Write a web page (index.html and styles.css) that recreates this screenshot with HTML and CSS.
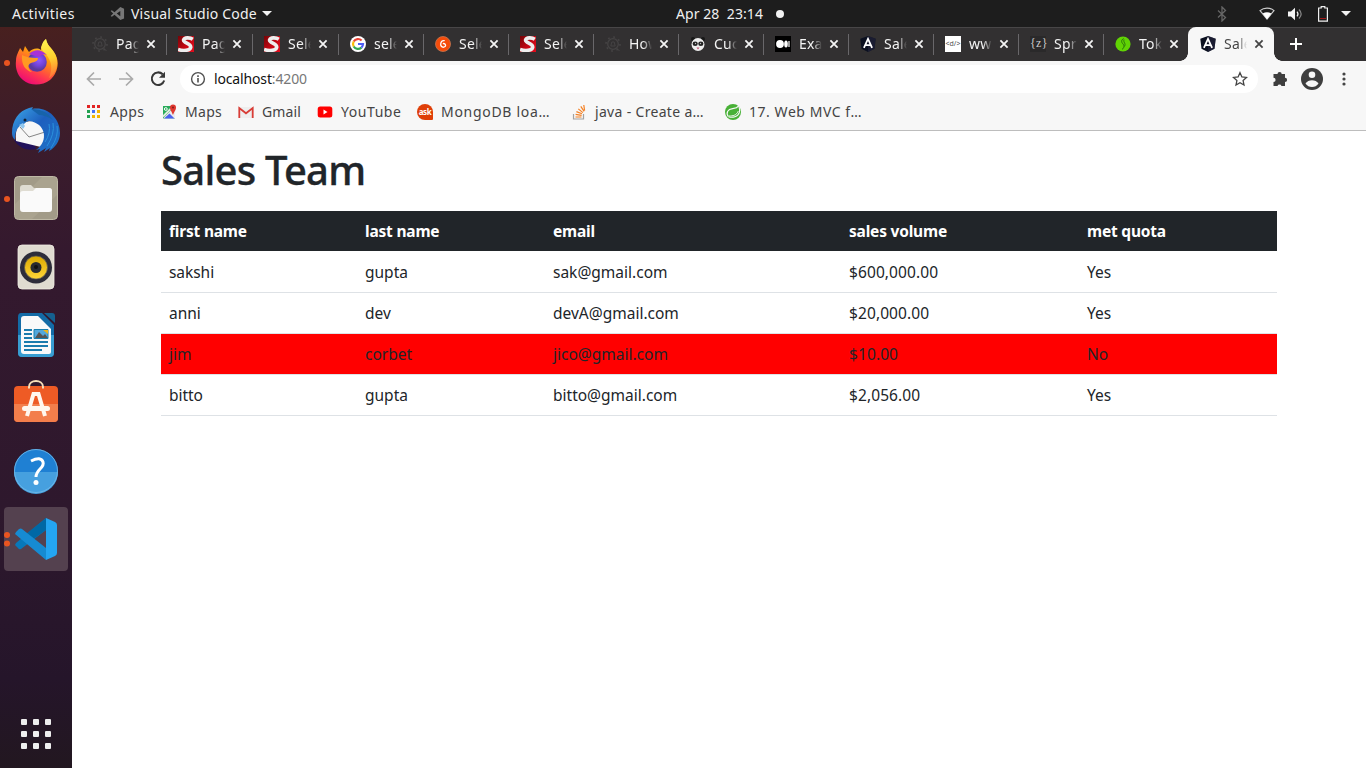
FILE: index.html
```html
<!DOCTYPE html>
<html lang="en">
<head>
<meta charset="utf-8">
<title>Sales Team</title>
<link rel="stylesheet" href="styles.css">
</head>
<body>
<svg class="defs" aria-hidden="true">
  <defs>
    <linearGradient id="fox" x1="0.8" y1="0" x2="0.3" y2="1"><stop offset="0" stop-color="#fff44f"/><stop offset=".4" stop-color="#ff980e"/><stop offset=".75" stop-color="#ff3750"/><stop offset="1" stop-color="#eb0878"/></linearGradient>
    <linearGradient id="foxtail" x1="0.5" y1="0" x2="0.6" y2="1"><stop offset="0" stop-color="#fff44f"/><stop offset=".5" stop-color="#ffd02e"/><stop offset="1" stop-color="#ff7139"/></linearGradient>
    <radialGradient id="globe" cx=".6" cy=".4"><stop offset="0" stop-color="#9059ff"/><stop offset=".6" stop-color="#7243d8"/><stop offset="1" stop-color="#5b3a9e"/></radialGradient>
    <linearGradient id="bird" x1="0" y1="0" x2="1" y2="1"><stop offset="0" stop-color="#3da9e8"/><stop offset=".45" stop-color="#1d5fbe"/><stop offset="1" stop-color="#1f74c8"/></linearGradient>
    <linearGradient id="redfade" x1="0" y1="0" x2="1" y2="1"><stop offset="0" stop-color="#730407"/><stop offset=".55" stop-color="#c50713"/><stop offset="1" stop-color="#e30b1c"/></linearGradient>
    <linearGradient id="cone" x1="0" y1="0" x2="0" y2="1"><stop offset="0" stop-color="#dba900"/><stop offset="1" stop-color="#ffd638"/></linearGradient>
  </defs>
  <symbol id="close" viewBox="0 0 10 10"><path d="M1.4 1.4l7.2 7.2M8.6 1.4L1.4 8.6" fill="none" stroke="currentColor" stroke-width="1.8"/></symbol>
  <symbol id="gear" viewBox="0 0 16 16"><g fill="none" stroke="#454344"><circle cx="8" cy="8" r="5.3" stroke-width="1.3"/><circle cx="8" cy="8" r="7" stroke-width="1.6" stroke-dasharray="1.8 3.7"/><path d="M5.8 10l1-4h2.4l1 4zM11.5 12l3 3" /></g></symbol>
  <symbol id="sel" viewBox="0 0 16 16"><path fill="url(#redfade)" d="M0 0h16v16H0z"/><path d="M14.800 3.200C12 1.400 6.400 1.200 5.600 3.900c-.7 3 7.800 3.600 7.100 7.400-.6 3.500-7.500 3.800-12.600 2.200" fill="none" stroke="#eee" stroke-width="3.6"/></symbol>
  <symbol id="ng" viewBox="0 0 16 16"><path fill="#0b1020" d="M8 0l7.700 2.700-1.200 10L8 16l-6.500-3.300-1.200-10z"/><path fill="#24243e" opacity=".6" d="M8 0l7.700 2.700-1.200 10L8 16z"/><path d="M3.900 11.800L8 2.800l4.100 9M5.600 9.100h4.800" fill="none" stroke="#fff" stroke-width="1.800"/></symbol>
</svg>

<header class="topbar">
  <span class="activities">Activities</span>
  <svg class="topcode" viewBox="0 0 16 16"><path d="M11 1L4.800 6.700 2 4.500.7 5.300 3.400 8 .7 10.700l1.300.8 2.800-2.200L11 15l4-1.800V2.800zM11 5.200v5.600L7.200 8z" fill="#777" fill-rule="evenodd"/></svg>
  <span class="appname">Visual Studio Code</span>
  <svg class="caret" viewBox="0 0 10 5"><path d="M0 0h10L5 5z" fill="#f2f2f2"/></svg>
  <span class="clock">Apr 28&nbsp; 23:14</span>
  <span class="notice"></span>
  <div class="status">
    <svg class="bt" viewBox="0 0 10 16"><path d="M1 4.500l7.500 7L5 15V1l3.500 3.500-7.500 7" fill="none" stroke="#666" stroke-width="1.300"/></svg>
    <svg class="wifi" viewBox="0 0 16 13"><path d="M1 3.600C5 .2 11 .2 15 3.600L8 12z" fill="none" stroke="#ccc" stroke-width="1.200"/><path d="M3.700 6.500q4.300-2.400 8.600 0L8 12.300z" fill="#fff"/></svg>
    <svg class="volume" viewBox="0 0 15 14"><path d="M0 4.500h3L7 .8v12.400L3 9.500H0z" fill="#f4f4f4"/><path d="M9 4.600q2 2.400 0 4.800" fill="none" stroke="#eee" stroke-width="1.200"/><path d="M11 2.500q4.300 4.500 0 9" fill="none" stroke="#888" stroke-width="1.200"/></svg>
    <svg class="battery" viewBox="0 0 10 16"><path d="M.6 2h2.600V.7h3.600V2h2.600v13.200H.6z" fill="none" stroke="#eee" stroke-width="1.200"/><path d="M2 12.500h6" stroke="#a01818"/></svg>
    <svg class="caret" viewBox="0 0 10 5"><path d="M0 0h10L5 5z" fill="#f2f2f2"/></svg>
  </div>
</header>

<div class="desktop">
  <nav class="dock">
    <div class="slot running"><svg viewBox="0 0 48 48">
      <path d="M4 23C4 17 7 13 8 10l3 4 2-6 4 6C20 11 25 9 29 12c0-4 2-8 5-11 1 6 5 8 8 13 7 10 3 22-4 28-8 6-20 6-27 0C6 38 3 31 4 23z" fill="url(#fox)"/>
      <path d="M29 10c1-5 3-8 5-9 1 6 4 8 7 12 8 11 3 23-4 27 3-8 3-14 0-19-2-5-6-7-8-11z" fill="url(#foxtail)"/>
      <circle cx="25" cy="24" r="9.800" fill="url(#globe)"/>
      <path d="M10 17c4 2 8 3 16 3 0 3-3 4-7 5-4 2-3 6 1 9-6-1-11-7-10-17z" fill="#ff9a22"/>
      <path d="M17 16q9-8 18 1-4-2-8 2z" fill="#a831d7"/></svg></div>
    <div class="slot"><svg viewBox="0 0 48 48">
      <path d="M2 34c6 9 14 11 22 9l-2-6z" fill="#20115b"/>
      <path d="M6 20q10-8 27-3l3 8-3 17L4 35q-1-9 2-15z" fill="#f7f7f7"/>
      <path d="M8 21l9 10 16-5" fill="none" stroke="#777" stroke-width=".900"/>
      <path d="M0 27C0 14 7 5 17 2l4-1-1 2C34 0 48 11 48 27c0 8-5 15-11 18l1-3-6 4 2-4-8 5 2-4-4 1c13-9 10-27-7-29-5 1-5 5-8 4-5 4-6 8-6 15C1 32 0 30 0 27z" fill="url(#bird)"/>
      <path d="M19 3q14-1 22 11-8-5-14-5z" fill="#1763aa"/>
      <path d="M41 17q2 11-6 23M45 20q2 10-6 22M37 18q2 9-4 18" stroke="#2b91dc" fill="none"/>
      <path d="M7 19l4-2 2 3-2 3z" fill="#91c7ee"/><circle cx="13" cy="14" r="1.500" fill="#123"/></svg></div>
    <div class="slot running"><svg viewBox="0 0 48 48">
      <rect x="2.500" y="2.500" width="43" height="43" rx="4" fill="#a29b88" stroke="#beb8a5"/><path d="M3 30L30 3h12q3 0 3 3v15L20 45H6q-3 0-3-3z" fill="#b3ac99" opacity=".45"/>
      <path d="M8 14q0-3 3-3h8l3 3h15q3 0 3 3v6H8z" fill="#dfdcd2"/><path d="M8 20q0-3 3-3h10l3-3h13q3 0 3 3v18q0 3-3 3H11q-3 0-3-3z" fill="#fafafa"/></svg></div>
    <div class="slot"><svg viewBox="0 0 48 48">
      <rect x="6" y="2" width="36" height="44" rx="4" fill="#dfdbd0" stroke="#f0ede5" stroke-width=".8"/><circle cx="24" cy="24.500" r="16" fill="#2d2d3a"/><circle cx="24" cy="24.500" r="11.500" fill="url(#cone)" stroke="#555" stroke-width=".7"/><circle cx="24" cy="24.500" r="5.500" fill="#292b30"/><circle cx="24" cy="24" r="2" fill="#111"/></svg></div>
    <div class="slot"><svg viewBox="0 0 48 48">
      <path d="M9 2h21l12 12v28q0 4-4 4H10q-4 0-4-4V6q0-4 3-4z" fill="#136ba6"/><path d="M6 24h36v18q0 4-4 4H10q-4 0-4-4z" fill="#389dd1"/><path d="M32 2h8q3 0 3 3v7z" fill="#15608f"/>
      <path d="M12 5h14l13 13v23q0 2-2 2H12q-3 0-3-3V8q0-3 3-3z" fill="#f9f9f9"/>
      <path d="M12 19h8M12 23h8M12 27h8M12 31h24M12 35h24M12 39h18" stroke="#1a7bad" stroke-width="1.800"/><path d="M22 18.500h14v9H22z" fill="#54a8dc" stroke="#177eae"/><path d="M23 27l4-6 4 4 2-2 3 4z" fill="#555"/><path d="M31 19h5v4z" fill="#edb51b"/></svg></div>
    <div class="slot"><svg viewBox="0 0 48 48">
      <rect x="2" y="7" width="44" height="36" rx="4" fill="#ee5b25"/><path d="M2 25h44v14q0 4-4 4H6q-4 0-4-4z" fill="#f37e4b"/><path d="M17 9.500V8c0-8 14-8 14 0v1.500" fill="none" stroke="#f8dfb9" stroke-width="2"/>
      <path d="M15 37l6.500-22h5L33 37" fill="none" stroke="#fff7ee" stroke-width="4"/><rect x="10" y="27" width="28" height="5" rx="2.500" fill="#fff7ee"/></svg></div>
    <div class="slot"><svg viewBox="0 0 48 48"><circle cx="24" cy="24" r="22" fill="#1f80d3"/><path d="M2 25h44a22 22 0 0 1-44 0z" fill="#46a0df"/><circle cx="24" cy="24" r="21.500" fill="none" stroke="#75bbe8" stroke-width=".8"/><path d="M19 14q10-5 12 1c2 6-7 7-7 15" fill="none" stroke="#fff" stroke-width="3"/><circle cx="24" cy="35.500" r="2.500" fill="#fff"/></svg></div>
    <div class="slot focused"><svg viewBox="0 0 48 48">
      <path d="M34 3v12L9 34q-2 1-3-1l-3-3 1-2z" fill="#0878b9"/><path d="M34 3v12L20 25l-6-6z" fill="#0068a5"/>
      <path d="M4 17l3-3q2-1 3 0l24 19v12L3 19z" fill="#168bd2"/><path d="M34 3l9 4q2 1 2 3v28q0 2-2 3l-9 4z" fill="#24a5f1"/></svg></div>
    <div class="apps-grid"><i></i><i></i><i></i><i></i><i></i><i></i><i></i><i></i><i></i></div>
  </nav>

  <main class="browser">
    <div class="tabs">
      <div class="tab wide"><svg class="fav"><use href="#gear"/></svg><span class="label">Pag</span><svg class="x"><use href="#close"/></svg></div>
      <div class="tab wide"><svg class="fav"><use href="#sel"/></svg><span class="label">Pag</span><svg class="x"><use href="#close"/></svg></div>
      <div class="tab wide"><svg class="fav"><use href="#sel"/></svg><span class="label">Sele</span><svg class="x"><use href="#close"/></svg></div>
      <div class="tab"><svg class="fav" viewBox="0 0 16 16"><circle cx="8" cy="8" r="8" fill="#fff"/><g fill="none" stroke-width="2.200"><path d="M11.600 4.500A5 5 0 0 0 3.700 5.500" stroke="#ea4335"/><path d="M3.700 5.500a5 5 0 0 0 0 5" stroke="#fbbc05"/><path d="M3.700 10.500a5 5 0 0 0 7.700 1.100" stroke="#34a853"/><path d="M11.400 11.600A5 5 0 0 0 13 8H8" stroke="#4d5df5"/></g></svg><span class="label">sele</span><svg class="x"><use href="#close"/></svg></div>
      <div class="tab"><svg class="fav" viewBox="0 0 16 16"><circle cx="8" cy="8" r="7.500" fill="#f54c0b" stroke="#c77752" stroke-width=".8"/><path d="M9.700 4.700C7 4 5.500 6 5.700 9q.5 2.500 3 2.200 2.200-.4 1.800-2.200-.6-2-2.700-1.400" fill="none" stroke="#fff" stroke-width="1.300"/></svg><span class="label">Sele</span><svg class="x"><use href="#close"/></svg></div>
      <div class="tab"><svg class="fav"><use href="#sel"/></svg><span class="label">Sele</span><svg class="x"><use href="#close"/></svg></div>
      <div class="tab"><svg class="fav"><use href="#gear"/></svg><span class="label">How</span><svg class="x"><use href="#close"/></svg></div>
      <div class="tab"><svg class="fav" viewBox="0 0 16 16"><circle cx="3" cy="3" r="2" fill="#171717"/><circle cx="13" cy="3" r="2" fill="#171717"/><circle cx="8" cy="8.500" r="6.500" fill="#eee"/><ellipse cx="5.200" cy="7.800" rx="2.600" ry="2.200" fill="#222"/><ellipse cx="10.800" cy="7.800" rx="2.600" ry="2.200" fill="#222"/><circle cx="5.500" cy="7.500" r=".7" fill="#bbb"/><circle cx="10.500" cy="7.500" r=".7" fill="#bbb"/><path d="M6.500 11.500h3l-1.500 2z" fill="#c05070"/></svg><span class="label">Cuc</span><svg class="x"><use href="#close"/></svg></div>
      <div class="tab"><svg class="fav" viewBox="0 0 16 16"><path d="M0 0h16v16H0z"/><circle cx="5" cy="8" r="3.900" fill="#fff"/><ellipse cx="11" cy="8" rx="1.800" ry="3.600" fill="#fff"/><path d="M14 5v6" stroke="#fff" stroke-width="1.200"/></svg><span class="label">Exa</span><svg class="x"><use href="#close"/></svg></div>
      <div class="tab"><svg class="fav"><use href="#ng"/></svg><span class="label">Sale</span><svg class="x"><use href="#close"/></svg></div>
      <div class="tab"><span class="fav codefav">&lt;d/&gt;</span><span class="label">ww</span><svg class="x"><use href="#close"/></svg></div>
      <div class="tab"><span class="fav bracefav">{z}</span><span class="label">Spr</span><svg class="x"><use href="#close"/></svg></div>
      <div class="tab last"><svg class="fav" viewBox="0 0 16 16"><circle cx="8" cy="8" r="7.600" fill="#61d404"/><path d="M8.600 2.500c-3 2-2 4-.6 5.500s1.500 3.500-1 5.500M9 3.500c-1 3 2.500 4 .3 7" fill="none" stroke="#28720c" stroke-width="1"/></svg><span class="label">Tok</span><svg class="x"><use href="#close"/></svg></div>
      <div class="tab active"><svg class="fav"><use href="#ng"/></svg><span class="label">Sale</span><svg class="x"><use href="#close"/></svg></div>
      <svg class="newtab" viewBox="0 0 12 12"><path d="M6 0v12M0 6h12" stroke="#fff" stroke-width="2"/></svg>
    </div>

    <div class="toolbar">
      <svg class="back" viewBox="0 0 16 16"><path d="M15 8H2M8 1.500L1.500 8 8 14.500" fill="none" stroke="#aaa" stroke-width="1.700"/></svg>
      <svg class="forward" viewBox="0 0 16 16"><path d="M1 8h13M8 1.500L14.500 8 8 14.500" fill="none" stroke="#aaa" stroke-width="1.700"/></svg>
      <svg class="reload" viewBox="0 0 16 16"><path d="M12.700 3.300A6.300 6.300 0 1 0 14.200 9.500" fill="none" stroke="#373737" stroke-width="2"/><path d="M15 .8v6H9z" fill="#373737"/></svg>
      <div class="omnibox">
        <svg class="info" viewBox="0 0 16 16"><circle cx="8" cy="8" r="6.400" fill="none" stroke="#505050" stroke-width="1.400"/><path d="M8 7v4.500M8 4.300v1.600" stroke="#505050" stroke-width="1.600"/></svg>
        <span class="url">localhost<span class="port">:4200</span></span>
        <svg class="star" viewBox="0 0 16 16"><path d="M8 1.700l1.900 4.200 4.600.5-3.400 3.100.9 4.600L8 11.800l-4 2.300.9-4.600-3.400-3.100 4.600-.5z" fill="none" stroke="#444" stroke-width="1.300"/></svg>
      </div>
      <svg class="puzzle" viewBox="0 0 16 16"><path d="M1.500 3h4a2.100 2.100 0 0 1 4.200 0H13v3.800a2.100 2.100 0 0 1 0 4.200v4H9.500a2.100 2.100 0 0 0-4 0h-4v-4a2.100 2.100 0 0 0 0-4.200z" fill="#3e3e3e"/></svg>
      <svg class="profile" viewBox="0 0 22 22"><circle cx="11" cy="11" r="11" fill="#3e3e3e"/><circle cx="11" cy="6.700" r="3.300" fill="#f7f7f7"/><path d="M4.500 15.500c2.500-4.500 10.500-4.500 13 0q-2.500 3.500-6.500 3.500t-6.500-3.500z" fill="#f7f7f7"/></svg>
      <svg class="menu" viewBox="0 0 4 14"><g fill="#444"><circle cx="2" cy="2" r="1.600"/><circle cx="2" cy="7" r="1.600"/><circle cx="2" cy="12" r="1.600"/></g></svg>
    </div>

    <div class="bookmarks">
      <a class="bm b-apps"><svg viewBox="0 0 16 16"><g transform="translate(1 0)"><path d="M1 1h3v3H1zM6 1h3v3H6zM11 1h3v3h-3z" fill="#e22424"/><path d="M1 6h3v3H1zM1 11h3v3H1z" fill="#21a150"/><path d="M6 6h3v3H6z" fill="#4671f5"/><path d="M11 6h3v3h-3zM6 11h3v3H6zM11 11h3v3h-3z" fill="#f4b400"/></g></svg><span>Apps</span></a>
      <a class="bm b-maps"><svg viewBox="0 0 16 16"><path d="M2 2h12v12.500H2z" fill="#29ab5a"/><path d="M2 14.500L14 2v12.500z" fill="#ececec"/><path d="M3 14.500l5.500-5 5 5z" fill="#4b60ee"/><path d="M2 12.500l8-8" stroke="#e5ecdf" stroke-width="1.800"/><circle cx="4.800" cy="5" r="1.400" fill="none" stroke="#fff"/><path d="M12 11C10.500 7 9 6 9 3.500a3 3 0 0 1 6 0C15 6 13.500 7 12 11z" fill="#df3830"/><circle cx="12" cy="3.500" r="1" fill="#801d1b"/></svg><span>Maps</span></a>
      <a class="bm b-gmail"><svg viewBox="0 0 16 16"><path d="M.5 3h15v11H.5z" fill="#eee"/><path d="M1.300 14V4L8 9.300 14.700 4v10" fill="none" stroke="#d93d37" stroke-width="1.800"/></svg><span>Gmail</span></a>
      <a class="bm b-yt"><svg viewBox="0 0 16 16"><rect x=".7" y="2.500" width="14.600" height="11" rx="2.500" fill="#f00"/><path d="M6.500 5.500v5l4-2.500z" fill="#fff"/></svg><span>YouTube</span></a>
      <a class="bm b-mongo"><i class="ask">ask</i><span>MongoDB loa…</span></a>
      <a class="bm b-java"><svg viewBox="0 0 16 16"><path d="M2.500 10v5h10v-5" fill="none" stroke="#a2a2a2" stroke-width="1.200"/><g stroke="#f48024" stroke-width="1.200"><path d="M4.500 13h6M4.600 10.400l6 .9M5.400 7.600l5.600 2.100M7.300 4.900l4.600 3.700M9.800 2.300l3.300 5M12.800 1l.8 5.500"/></g></svg><span>java - Create a…</span></a>
      <a class="bm b-mvc"><svg viewBox="0 0 16 16"><circle cx="8" cy="8" r="8" fill="#48b137"/><path d="M13.700 1.800C10.500 6 5 3.500 2.700 7.200 1.700 9 2.200 11 3.400 12.600" fill="none" stroke="#f7f7f7" stroke-width="1.200"/><path d="M3.500 12.700c4 1.300 9.500.2 10.800-4 .7-2.300.3-4.500-.4-6.700" fill="none" stroke="#f7f7f7" stroke-width="1.100"/><path d="M4 12c4 .2 7.500-.8 9.200-4.800" fill="none" stroke="#f7f7f7" stroke-width="1"/></svg><span>17. Web MVC f…</span></a>
    </div>

    <section class="page">
      <h1>Sales Team</h1>
      <table>
        <colgroup><col class="c1"><col class="c2"><col class="c3"><col class="c4"><col class="c5"></colgroup>
        <thead><tr><th>first name</th><th>last name</th><th>email</th><th>sales volume</th><th>met quota</th></tr></thead>
        <tbody>
          <tr><td>sakshi</td><td>gupta</td><td>sak@gmail.com</td><td>$600,000.00</td><td>Yes</td></tr>
          <tr><td>anni</td><td>dev</td><td>devA@gmail.com</td><td>$20,000.00</td><td>Yes</td></tr>
          <tr class="missed"><td>jim</td><td>corbet</td><td>jico@gmail.com</td><td>$10.00</td><td>No</td></tr>
          <tr><td>bitto</td><td>gupta</td><td>bitto@gmail.com</td><td>$2,056.00</td><td>Yes</td></tr>
        </tbody>
      </table>
    </section>
  </main>
</div>
</body>
</html>
```

FILE: styles.css
```css
* { box-sizing: border-box; }
body { margin: 0; width: 1366px; height: 768px; overflow: hidden; background: #fff; font-family: "Noto Sans", "Open Sans", sans-serif; }
svg { display: block; flex: none; }
.defs { position: absolute; width: 0; height: 0; }

.topbar { height: 27px; background: #1d1d1d; color: #f0f0f0; display: flex; align-items: center; font-size: 14px; white-space: nowrap; }
.activities { margin-left: 12px; width: 98px; letter-spacing: .45px; }
.topcode { width: 15px; height: 15px; }
.appname { margin-left: 6px; width: 126px; letter-spacing: .22px; }
.caret { width: 10px; height: 5px; margin-left: 5px; }
.clock { margin-left: 404px; width: 88px; letter-spacing: .07px; }
.notice { width: 8px; height: 8px; border-radius: 50%; background: #f2f2f2; margin-left: 12px; }
.status { margin-left: 433px; display: flex; align-items: center; }
.bt { width: 10px; height: 16px; }
.wifi { width: 16px; height: 13px; margin-left: 32px; }
.volume { width: 15px; height: 14px; margin-left: 13px; }
.battery { width: 10px; height: 16px; margin-left: 15px; }
.status .caret { margin-left: 13px; }

.desktop { display: flex; height: 741px; }
.dock { width: 72px; flex: none; display: flex; flex-direction: column; align-items: center; padding-top: 3px; background: linear-gradient(#48201f 0, #3b1c2c 16%, #34192e 30%, #2e182d 65%, #25152a 88%, #221720); }
.slot { position: relative; width: 64px; height: 64px; margin-bottom: 4.2px; border-radius: 4px; display: flex; align-items: center; justify-content: center; }
.slot svg { width: 48px; height: 48px; }
.focused { background: #54414f; margin-bottom: 0; }
.running::before, .focused::before { content: ""; position: absolute; left: 0; top: 30px; width: 6px; height: 6px; border-radius: 50%; background: #e95420; }
.focused::before { top: 25px; box-shadow: 0 8.500px #e95420; }
.apps-grid { margin-top: auto; margin-bottom: 19px; display: grid; grid-template-columns: repeat(3, 6px); gap: 6px; }
.apps-grid i { width: 6px; height: 6px; border-radius: 1px; background: #eee; }

.browser { flex: 1; min-width: 0; }
.tabs { height: 34px; background: #323031; border-top: 1px solid #484647; display: flex; padding-left: 8px; }
.tab { position: relative; width: 85px; height: 33px; flex: none; display: flex; align-items: center; padding: 0 0 1px 12px; color: #f4f4f4; }
.wide { width: 86px; }
.tab::after { content: ""; position: absolute; right: -1px; top: 6px; width: 1px; height: 21px; background: #69676a; }
.fav { width: 16px; height: 16px; flex: none; }
.label { width: 23px; margin-left: 8px; overflow: hidden; font-size: 14px; line-height: 20px; letter-spacing: .2px; white-space: nowrap; -webkit-mask-image: linear-gradient(90deg, #000 60%, transparent); mask-image: linear-gradient(90deg, #000 60%, transparent); }
.x { width: 10px; height: 10px; margin-left: 7px; }
.codefav { background: #fff; color: #555; font-size: 7px; line-height: 16px; text-align: center; }
.bracefav { color: #ccc; font: 12px/14px "Liberation Serif", serif; text-align: center; letter-spacing: .3px; background: #2a292a; }
.last::after { display: none; }
.active { width: 86px; margin-top: -1px; height: 34px; padding-bottom: 0; background: #f7f7f7; border-radius: 8px 8px 0 0; color: #444; }
.active::before { content: ""; position: absolute; left: -8px; bottom: 0; width: 8px; height: 8px; background: radial-gradient(circle at 0 0, transparent 7.500px, #f7f7f7 8px); }
.active::after { top: auto; bottom: 0; right: -8px; width: 8px; height: 8px; background: radial-gradient(circle at 100% 0, transparent 7.500px, #f7f7f7 8px); }
.newtab { width: 12px; height: 12px; margin: 10px 0 0 16px; }

.toolbar { height: 36px; background: #f7f7f7; display: flex; align-items: center; padding-left: 14px; }
.back, .forward, .reload { width: 16px; height: 16px; }
.forward, .reload { margin-left: 16px; }
.omnibox { width: 1078px; height: 28px; margin-left: 14px; border-radius: 14px; background: #fff; display: flex; align-items: center; padding-left: 10px; }
.info { width: 16px; height: 16px; }
.url { margin: 0 0 1px 8px; font-size: 14px; letter-spacing: -.15px; color: #111; }
.port { color: #777; }
.star { width: 16px; height: 16px; margin: 0 10px 0 auto; }
.puzzle { width: 16px; height: 16px; margin-left: 14px; }
.profile { width: 22px; height: 22px; margin-left: 13px; }
.menu { width: 4px; height: 14px; margin-left: 19px; }

.bookmarks { height: 34px; background: #f7f7f7; border-bottom: 1px solid #bdbdbd; display: flex; padding: 7px 0 0 13px; color: #444; font-size: 14px; line-height: 16px; }
.bm { display: flex; height: 16px; white-space: nowrap; }
.bm svg { width: 16px; height: 16px; }
.bm span { margin-left: 8px; letter-spacing: .32px; }
.b-apps { width: 76px; }
.b-apps span { margin-left: 9px; }
.b-maps { width: 77px; }
.b-gmail { width: 79px; }
.b-gmail span { letter-spacing: .1px; }
.b-yt { width: 100px; }
.b-yt span { letter-spacing: .55px; }
.b-mongo { width: 154px; }
.b-mongo span { letter-spacing: .7px; }
.b-java { width: 154px; }
.b-mvc span { letter-spacing: .55px; }
.ask { width: 16px; height: 16px; border-radius: 8px 8px 1px 8px; background: #df3f08; color: #fff; font: bold 8px/15px "Noto Sans", sans-serif; text-align: center; letter-spacing: -.4px; }

.page { width: 1116px; margin-left: 89px; padding-top: 15px; color: #212529; }
h1 { margin: 0; height: 65px; font-size: 40px; line-height: 48px; font-weight: 500; letter-spacing: -.75px; white-space: nowrap; -webkit-text-stroke: .35px #212529; }
table { width: 1116px; border-collapse: separate; border-spacing: 0; table-layout: fixed; font-size: 15.500px; line-height: 24px; }
.c1 { width: 196px; } .c2 { width: 188px; } .c3 { width: 296px; } .c4 { width: 238px; } .c5 { width: 198px; }
th, td { padding: 8px; text-align: left; white-space: nowrap; }
th { height: 40px; background: #212529; color: #fff; font-weight: 700; letter-spacing: -.2px; }
td { height: 41px; border-bottom: 1px solid #dee2e6; letter-spacing: 0; }
tbody tr:first-child td { height: 42px; padding-top: 9px; }
.missed td { background-color: red; background-clip: padding-box; }
td:nth-child(4) { letter-spacing: .1px; }
td:nth-child(1) { letter-spacing: -.05px; }
```
